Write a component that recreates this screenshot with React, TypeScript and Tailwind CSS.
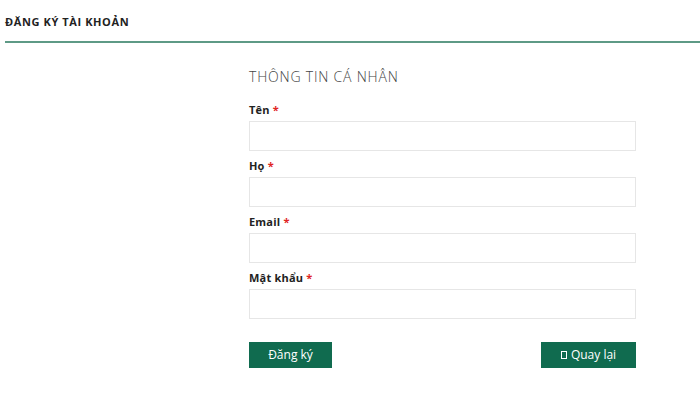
const fields = ['Tên', 'Họ', 'Email', 'Mật khẩu'];

export default function App() {
  return (
    <div
      className="w-[700px] h-[397px] bg-white overflow-hidden"
      style={{ fontFamily: '"Open Sans", "Noto Sans", sans-serif' }}
    >
      {/* Header */}
      <div className="ml-[5px] h-[43px] pt-[14px] border-b-2 border-[#5e9a86]">
        <h1 className="text-[11px] leading-[16px] font-bold text-[#222] tracking-[0.6px]">
          ĐĂNG KÝ TÀI KHOẢN
        </h1>
      </div>

      {/* Form */}
      <div className="ml-[249px] w-[387px] pt-[24px]">
        <h2 className="text-[14px] leading-[20px] font-light text-[#444] tracking-[0.8px] mb-[15px]">
          THÔNG TIN CÁ NHÂN
        </h2>

        <div className="flex flex-col gap-[7px]">
          {fields.map((label) => (
            <div key={label}>
              <label className="block text-[11px] leading-[16px] font-bold text-[#222] tracking-[0.2px] mb-[3px]">
                {label} <span className="text-[#e02424]">*</span>
              </label>
              <input
                type={label === 'Mật khẩu' ? 'password' : 'text'}
                className="block w-full h-[30px] border border-[#e6e6e6] bg-white outline-none px-2 text-[12px]"
              />
            </div>
          ))}
        </div>

        <div className="flex items-center justify-between mt-[23px]">
          <button className="w-[83px] h-[26px] bg-[#106b4f] text-white text-[12px] font-medium">
            Đăng ký
          </button>
          <button className="w-[95px] h-[26px] bg-[#106b4f] text-white text-[12px] font-medium flex items-center justify-center gap-[4px]">
            <span className="inline-block w-[6px] h-[8px] border border-white" />
            Quay lại
          </button>
        </div>
      </div>
    </div>
  );
}
